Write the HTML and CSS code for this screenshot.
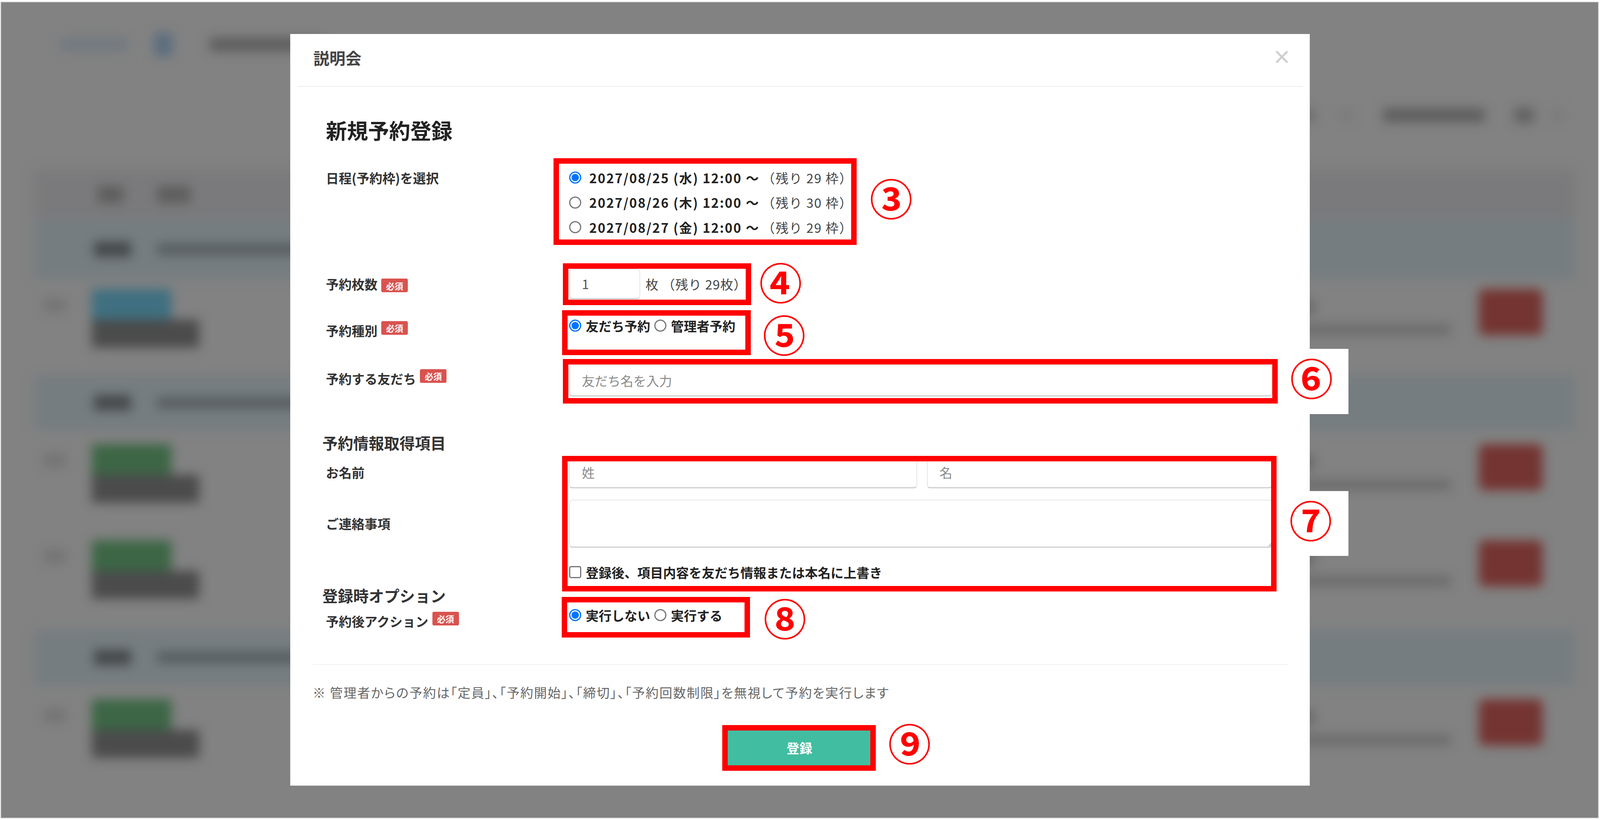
FILE: index.html
```html
<!DOCTYPE html>
<html lang="ja">
<head>
<meta charset="utf-8">
<title>説明会</title>
<link rel="stylesheet" href="styles.css">
</head>
<body>
<div class="screen">
  <div class="backdrop">
    <div class="blurred">
      <div class="crumbs">
        <i class="b b-link"></i><i class="b b-icon"></i><i class="b b-title"></i>
      </div>
      <div class="tools">
        <i class="b b-t1"></i><i class="b b-t2"></i><i class="b b-t3"></i><i class="b b-t4"></i><i class="b b-t5"></i>
      </div>
      <div class="table">
        <div class="thead"><i class="b b-h1"></i><i class="b b-h2"></i></div>
        <div class="band band-1"><i class="b b-tag"></i><i class="b b-line"></i></div>
        <div class="row row-1">
          <i class="b b-check"></i>
          <div class="pills"><i class="b pill-top pill-blue"></i><i class="b pill-low"></i></div>
          <div class="info"><i class="b b-i1"></i><i class="b b-i2"></i></div>
          <i class="b b-red"></i>
        </div>
        <div class="band band-2"><i class="b b-tag"></i><i class="b b-line"></i></div>
        <div class="row row-2">
          <i class="b b-check"></i>
          <div class="pills"><i class="b pill-top pill-green"></i><i class="b pill-low"></i></div>
          <div class="info"><i class="b b-i1"></i><i class="b b-i2"></i></div>
          <i class="b b-red"></i>
        </div>
        <div class="row row-3">
          <i class="b b-check"></i>
          <div class="pills"><i class="b pill-top pill-green"></i><i class="b pill-low"></i></div>
          <div class="info"><i class="b b-i1"></i><i class="b b-i2"></i></div>
          <i class="b b-red"></i>
        </div>
        <div class="band band-2"><i class="b b-tag"></i><i class="b b-line"></i></div>
        <div class="row row-4">
          <i class="b b-check"></i>
          <div class="pills"><i class="b pill-top pill-green"></i><i class="b pill-low"></i></div>
          <div class="info"><i class="b b-i1"></i><i class="b b-i2"></i></div>
          <i class="b b-red"></i>
        </div>
      </div>
    </div>
  </div>

  <div class="modal">
    <header class="modal-head">
      <h2 class="modal-title">説明会</h2>
      <span class="close">×</span>
    </header>

    <div class="modal-body">
      <h1 class="form-title">新規予約登録</h1>

      <div class="form-row r-date">
        <div class="label">日程(予約枠)を選択</div>
        <div class="field dates">
          <label class="date-line"><input type="radio" name="d" checked><b>2027/08/25 (水) 12:00 〜</b><span class="rest">（残り 29 枠）</span></label>
          <label class="date-line"><input type="radio" name="d"><b>2027/08/26 (木) 12:00 〜</b><span class="rest">（残り 30 枠）</span></label>
          <label class="date-line"><input type="radio" name="d"><b>2027/08/27 (金) 12:00 〜</b><span class="rest">（残り 29 枠）</span></label>
          <div class="mark m3"><span class="num n3">③</span></div>
        </div>
      </div>

      <div class="form-row r-count">
        <div class="label">予約枚数<span class="req">必須</span></div>
        <div class="field count">
          <input class="text count-input" type="text" value="1">
          <span class="count-unit">枚 （残り 29枚）</span>
          <div class="mark m4"><span class="num n4">④</span></div>
        </div>
      </div>

      <div class="form-row r-type">
        <div class="label label-low">予約種別<span class="req">必須</span></div>
        <div class="field choices">
          <label class="choice"><input type="radio" name="t" checked><b>友だち予約</b></label>
          <label class="choice"><input type="radio" name="t"><b>管理者予約</b></label>
          <div class="mark m5"><span class="num n5">⑤</span></div>
        </div>
      </div>

      <div class="form-row r-friend">
        <div class="label label-top">予約する友だち<span class="req">必須</span></div>
        <div class="field">
          <input class="text wide" type="text" placeholder="友だち名を入力">
          <div class="mark m6"><i class="patch p6"></i><span class="num n6">⑥</span></div>
        </div>
      </div>

      <h3 class="section section-1">予約情報取得項目</h3>

      <div class="group">
        <div class="form-row r-name">
          <div class="label">お名前</div>
          <div class="field name-fields">
            <input class="text" type="text" placeholder="姓">
            <input class="text" type="text" placeholder="名">
          </div>
        </div>
        <div class="form-row r-memo">
          <div class="label">ご連絡事項</div>
          <div class="field"><textarea class="memo"></textarea></div>
        </div>
        <div class="form-row r-over">
          <div class="label"></div>
          <label class="field choice"><input type="checkbox"><b>登録後、項目内容を友だち情報または本名に上書き</b></label>
        </div>
        <div class="mark m7"><i class="patch p7"></i><span class="num n7">⑦</span></div>
      </div>

      <h3 class="section section-2">登録時オプション</h3>

      <div class="form-row r-action">
        <div class="label label-low">予約後アクション<span class="req">必須</span></div>
        <div class="field choices">
          <label class="choice"><input type="radio" name="a" checked><b>実行しない</b></label>
          <label class="choice"><input type="radio" name="a"><b>実行する</b></label>
          <div class="mark m8"><span class="num n8">⑧</span></div>
        </div>
      </div>

      <div class="foot">
        <p class="note">※ 管理者からの予約は「定員」、「予約開始」、「締切」、「予約回数制限」を無視して予約を実行します</p>
        <div class="actions">
          <div class="submit-wrap">
            <button class="submit" type="button">登録</button>
            <div class="mark m9"><span class="num n9">⑨</span></div>
          </div>
        </div>
      </div>
    </div>
  </div>
</div>
</body>
</html>
```

FILE: styles.css
```css
* { box-sizing: border-box; }
html, body { margin: 0; height: 100%; background: #fff; overflow: hidden; }
body { padding: 4px 3px 4px 1px; font-family: "Noto Sans CJK JP", "Noto Sans", sans-serif; color: #333; }

.screen { position: relative; height: 100%; border: 2px solid #d2d2d2; background: #828282; overflow: hidden; }

/* blurred page behind the dialog */
.backdrop { position: absolute; inset: 0; overflow: hidden; }
.blurred { height: 100%; filter: blur(14px); }
.b { display: block; flex: none; }
.crumbs { display: flex; align-items: center; height: 216px; padding-left: 150px; }
.b-link { width: 175px; height: 34px; background: #727980; }
.b-icon { width: 46px; height: 60px; margin-left: 67px; background: #5a6d7e; }
.b-title { width: 280px; height: 36px; margin-left: 96px; background: #5e5e5e; }
.tools { display: flex; align-items: center; justify-content: flex-end; height: 146px; padding-right: 89px; }
.b-t1 { width: 60px; height: 30px; background: #6c6c6c; }
.b-t2 { width: 30px; height: 30px; margin-left: 63px; background: #7a7a7a; }
.b-t3 { width: 260px; height: 36px; margin-left: 80px; background: #5e5e5e; }
.b-t4 { width: 50px; height: 40px; margin-left: 76px; background: #626262; }
.b-t5 { width: 30px; height: 30px; margin-left: 45px; background: #7a7a7a; }
.table { margin: 67px 60px 0 84px; }
.thead { display: flex; align-items: center; height: 126px; background: #7a7a7c; padding-left: 163px; }
.b-h1 { width: 66px; height: 44px; background: #5e5e5e; }
.b-h2 { width: 86px; height: 44px; margin-left: 86px; background: #5e5e5e; }
.band { display: flex; align-items: center; background: #767d80; padding-left: 153px; }
.band-1 { height: 154px; }
.band-2 { height: 143px; }
.b-tag { width: 96px; height: 40px; background: #45494c; }
.b-line { width: 2800px; height: 28px; margin-left: 66px; background: #555b5f; }
.row { display: flex; align-items: flex-start; }
.row-1 { height: 244px; padding-top: 25px; }
.row-2 { height: 254px; padding-top: 35px; }
.row-3 { height: 255px; padding-top: 27px; }
.row-4 { height: 300px; padding-top: 36px; }
.b-check { width: 56px; height: 34px; margin: 24px 0 0 25px; background: #737373; }
.pills { flex: none; width: 300px; margin-left: 67px; }
.pill-top { width: 204px; height: 78px; }
.pill-blue { background: #3f6f80; }
.pill-green { background: #3c6645; }
.pill-low { width: 275px; height: 72px; background: #4b4b4b; }
.info { flex: none; width: 500px; margin: 0 72px 0 auto; padding-top: 28px; }
.b-i1 { width: 150px; height: 36px; background: #666; }
.b-i2 { width: 500px; height: 28px; margin-top: 26px; background: #6c6c6c; }
.b-red { width: 163px; height: 118px; margin-right: 82px; border-radius: 14px; background: #743431; }

/* dialog */
.modal { position: absolute; left: 18.107%; top: 81px; width: 63.83%; height: 1924px; background: #fff; }
.modal-head { display: flex; align-items: flex-start; justify-content: space-between; height: 135px; margin: 0 17px 0 21px; padding: 30px 33px 0 38px; border-bottom: 2px solid #e9ecef; }
.modal-title { margin: 0; font-size: 41px; line-height: 60px; font-weight: 700; color: #444; }
.close { margin-top: 5px; font: 400 72px/46px "Liberation Sans", sans-serif; color: #cfcfcf; }
.modal-body { padding: 0 96px 0 91px; }
.form-title { margin: 79px 0 0; font-size: 54px; line-height: 64px; font-weight: 700; color: #222; }

.form-row { display: grid; grid-template-columns: 25.73% 1fr; }
.label { display: flex; align-items: center; font-size: 33px; line-height: 64px; font-weight: 700; color: #333; }
.label-low { align-items: flex-start; padding-top: 12px; }
.label-top { align-items: flex-start; padding-top: 3px; }
.req { display: inline-flex; align-items: center; justify-content: center; width: 68px; height: 35px; margin: 8px 0 0 10px; border-radius: 4px; background: #d9534f; color: #fff; font-size: 22px; line-height: 1; font-weight: 700; }
.field { position: relative; }

.r-date { margin-top: 58px; }
.r-date .label { align-items: flex-start; line-height: 64px; }
.date-line { display: flex; align-items: center; height: 63.5px; font-size: 33px; }
.date-line b { margin-left: 20px; font-weight: 700; color: #222; letter-spacing: 2.4px; }
.rest { margin-left: 6px; color: #444; letter-spacing: 1.8px; }

input[type=radio], input[type=checkbox] { appearance: none; flex: none; width: 31px; height: 31px; margin: 0; background: #fff; border: 3px solid #767676; }
input[type=radio] { border-radius: 50%; }
input[type=radio]:checked { border-color: #0075ff; background: #0075ff; box-shadow: inset 0 0 0 3px #fff; }
input[type=checkbox] { border-radius: 5px; }

.r-count { margin-top: 74px; }
.count { display: flex; align-items: center; height: 78px; }
.text { width: 100%; height: 81px; padding: 0 30px; border: 2px solid #e6e6e6; border-bottom: 3px solid #cfcfcf; border-radius: 8px; background: #fff; font: 400 33px "Noto Sans CJK JP", sans-serif; color: #555; outline: 0; }
.text::placeholder { color: #8a8a8a; }
.count-input { flex: none; width: 182px; height: 78px; }
.count-unit { margin-left: 13px; font-size: 33px; letter-spacing: 1px; color: #444; white-space: nowrap; }

.r-type { margin-top: 36px; }
.choices { display: flex; align-items: flex-start; gap: 11px; }
.choice { display: flex; align-items: center; height: 64px; font-size: 33px; }
.choice b { margin-left: 11px; font-weight: 700; color: #222; }

.r-friend { margin-top: 56px; }
.wide { display: block; }

.section { margin: 0 0 0 -9px; font-size: 39.5px; font-weight: 700; color: #333; }
.section-1 { margin-top: 90px; line-height: 56px; }
.group { position: relative; margin-top: 8px; }
.name-fields { display: grid; grid-template-columns: 1.008fr 1fr; gap: 25px; }
.r-memo { margin-top: 29px; }
.memo { display: block; width: 100%; height: 123px; padding: 10px 30px; border: 2px solid #e6e6e6; border-bottom: 3px solid #cfcfcf; border-radius: 8px; background: #fff; outline: 0; }
.r-over { margin-top: 31px; }
.section-2 { margin-top: 5px; line-height: 44px; }

.r-action { margin-top: 0; }
.r-action .choice { height: 58px; }

.foot { margin: 78px -40px 0 -34px; padding-top: 48px; border-top: 2px solid #f0f0f0; }
.note { margin: 0; font-size: 33px; line-height: 44px; color: #666; font-feature-settings: "palt"; letter-spacing: 2px; white-space: nowrap; }
.actions { display: flex; justify-content: center; margin-top: 76px; padding: 0 4px 54px 0; }
.submit-wrap { position: relative; }
.submit { display: block; width: 366px; height: 89px; border: 0; background: #41bda1; color: #fff; font: 700 33px "Noto Sans CJK JP", sans-serif; }

/* annotation overlays */
.mark { position: absolute; border: 14px solid #f00; pointer-events: none; }
.m3 { left: -40px; top: -18px; width: 776px; height: 222px; }
.m4 { left: -16px; top: -14px; width: 482px; height: 107px; }
.m5 { left: -18px; top: -8px; width: 483px; height: 115px; }
.m6 { left: -16px; right: -14px; top: -15px; height: 114px; }
.m7 { left: calc(25.73% - 18px); right: -11px; top: -2px; height: 347px; }
.m8 { left: -19px; top: -18px; width: 482px; height: 104px; }
.m9 { left: -14px; top: -14px; width: 393px; height: 117px; }
.patch { position: absolute; display: block; width: 99px; background: #fff; }
.p6 { left: calc(100% + 96px); top: -40px; height: 167px; }
.p7 { left: calc(100% + 99px); top: 76px; height: 166px; }
.num { position: absolute; width: 118px; height: 118px; font-size: 110px; line-height: 118px; font-weight: 700; text-align: center; color: #f00; }
.n3 { left: 791px; top: 26px; }
.n4 { left: 484px; top: -28px; }
.n5 { left: 495px; top: -14px; }
.n6 { left: calc(100% + 42px); top: -28px; }
.n7 { left: calc(100% + 43px); top: 88px; }
.n8 { left: 498px; top: -22px; }
.n9 { left: 406px; top: -30px; }
```
